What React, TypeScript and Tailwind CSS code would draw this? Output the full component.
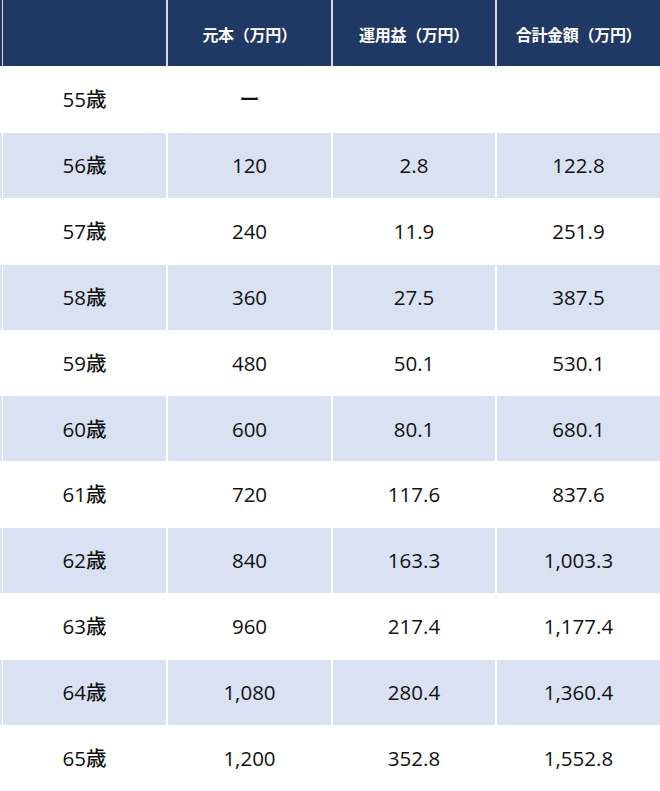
import React from "react";

const rows = [
  ["55歳", "ー", "", ""],
  ["56歳", "120", "2.8", "122.8"],
  ["57歳", "240", "11.9", "251.9"],
  ["58歳", "360", "27.5", "387.5"],
  ["59歳", "480", "50.1", "530.1"],
  ["60歳", "600", "80.1", "680.1"],
  ["61歳", "720", "117.6", "837.6"],
  ["62歳", "840", "163.3", "1,003.3"],
  ["63歳", "960", "217.4", "1,177.4"],
  ["64歳", "1,080", "280.4", "1,360.4"],
  ["65歳", "1,200", "352.8", "1,552.8"],
];

const headers = ["", "元本（万円）", "運用益（万円）", "合計金額（万円）"];

const cols = "grid grid-cols-[168px_165px_164px_163px]";

export default function App() {
  return (
    <div
      className="w-[660px] h-[791px] overflow-hidden bg-white text-[#111]"
      style={{ fontFamily: '"Open Sans", "Noto Sans CJK JP", sans-serif' }}
    >
      <div className={`${cols} h-[66px] bg-[#203864] text-white text-[16px] font-semibold tracking-[-0.3px]`}>
        {headers.map((h, i) => (
          <div
            key={i}
            className={`flex items-center justify-center pt-[3px] ${i < 3 ? "border-r-2 border-white/80" : ""} ${i === 0 ? "border-l border-[#9aa3b5] ml-[2px]" : ""}`}
          >
            {h}
          </div>
        ))}
      </div>
      {rows.map((r, ri) => (
        <div
          key={ri}
          className={`${cols} h-[65.9px] text-[20.5px] font-[520] ${ri % 2 === 1 ? "bg-[#d9e1f2]" : "bg-white"} border-t border-white`}
        >
          {r.map((c, ci) => (
            <div
              key={ci}
              className={`flex items-center justify-center ${ci < 3 ? "border-r-2 border-white" : ""} ${ci === 0 ? "border-l border-[#c9ccd2] ml-[2px]" : ""}`}
            >
              {c}
            </div>
          ))}
        </div>
      ))}
    </div>
  );
}
